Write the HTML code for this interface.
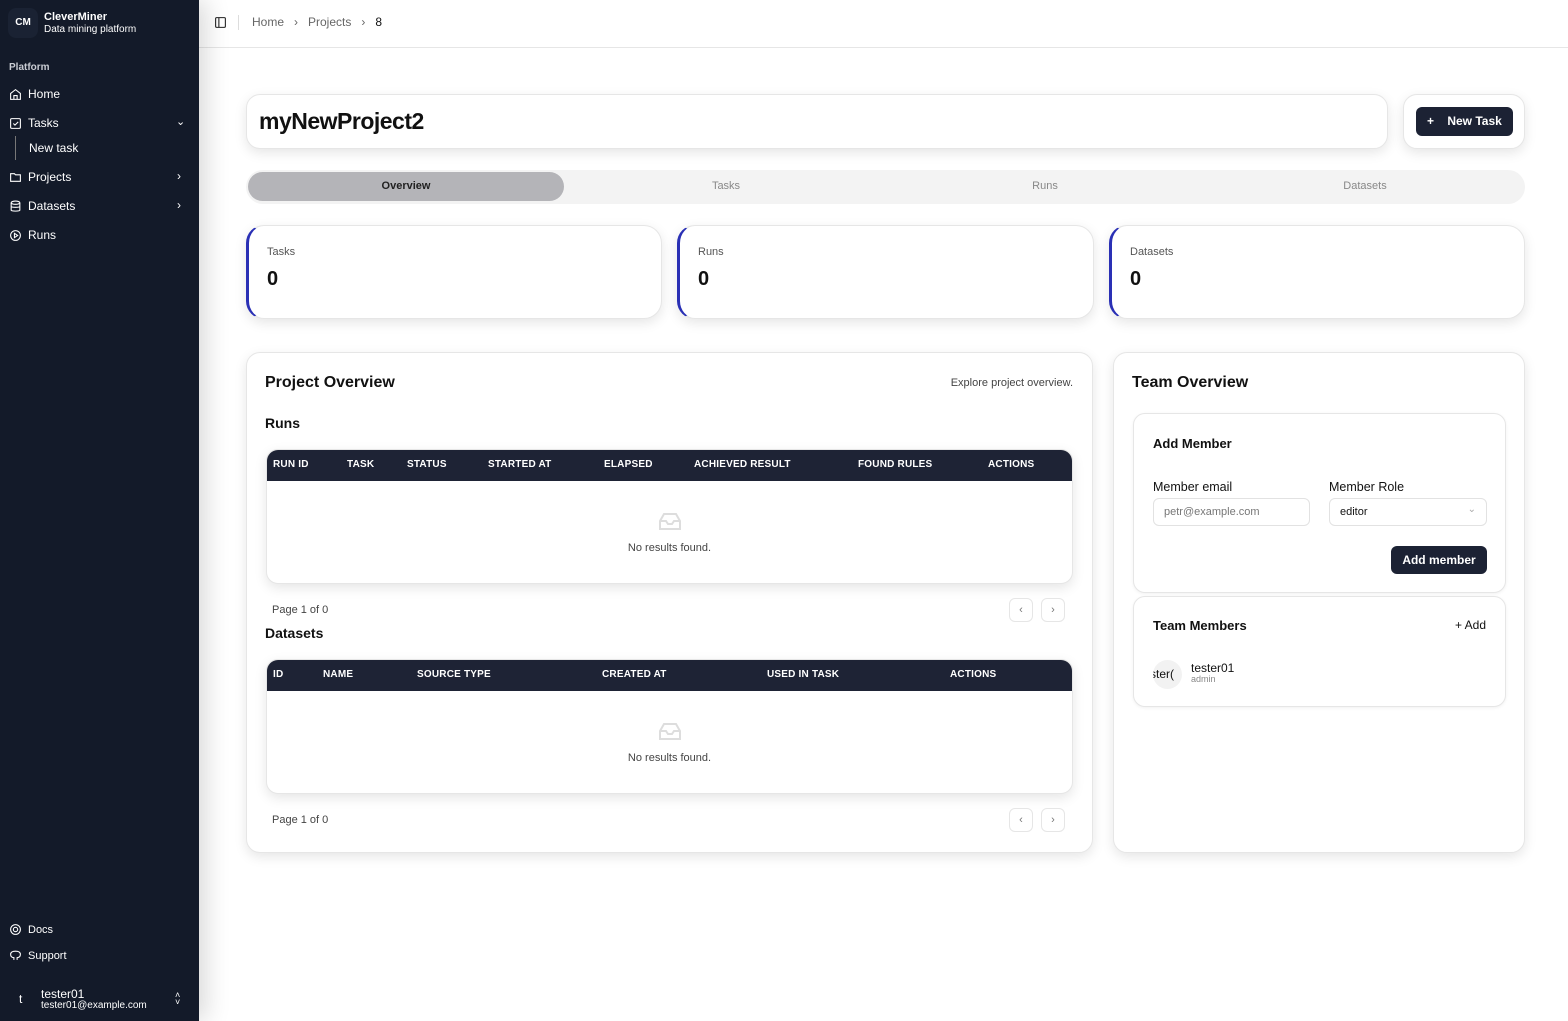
<!DOCTYPE html>
<html><head><meta charset="utf-8"><style>
*{box-sizing:border-box;margin:0;padding:0}
body{width:1568px;height:1021px;overflow:hidden;background:#fff;font-family:"Liberation Sans",sans-serif;color:#111;position:relative}
.a{position:absolute}
.sb{left:0;top:0;width:199px;height:1021px;background:#131a29;box-shadow:6px 0 24px rgba(0,0,0,.16);color:#fff;z-index:2}
.nav{position:absolute;left:9px;font-size:12px;display:flex;align-items:center;gap:6px}
.nav svg{width:13px;height:13px}
.card{position:absolute;background:#fff;border:1px solid #e6e6e6;border-radius:14px;box-shadow:0 4px 12px rgba(0,0,0,.1)}
.th{position:absolute;font-size:10px;font-weight:bold;color:#fff;top:9px;letter-spacing:.2px}
.pg{position:absolute;width:24px;height:24px;border:1px solid #e6e6e6;border-radius:6px;font-size:11px;color:#777;text-align:center;line-height:22px}
</style></head><body>
<div class="a sb">
 <div class="a" style="left:8px;top:8px;width:30px;height:30px;border-radius:8px;background:#1a2233;font-size:10px;font-weight:bold;text-align:center;line-height:30px">CM</div>
 <div class="a" style="left:44px;top:11px;font-size:11px;font-weight:bold">CleverMiner</div>
 <div class="a" style="left:44px;top:24px;font-size:10px">Data mining platform</div>
 <div class="a" style="left:9px;top:62px;font-size:10px;color:#c9ccd3;font-weight:bold">Platform</div>
 <div class="nav" style="top:87px"><svg viewBox="0 0 24 24" fill="none" stroke="#fff" stroke-width="2"><path d="M3 10l9-7 9 7v11H3z M9 21v-7h6v7"/></svg>Home</div>
 <div class="nav" style="top:116px"><svg viewBox="0 0 24 24" fill="none" stroke="#fff" stroke-width="2"><rect x="3" y="3" width="18" height="18" rx="2"/><path d="M8 12l3 3 6-6"/></svg>Tasks</div>
 <div class="a" style="left:176px;top:115px;font-size:11px">⌄</div>
 <div class="a" style="left:15px;top:136px;width:1px;height:24px;background:#777"></div>
 <div class="a" style="left:29px;top:141px;font-size:12px">New task</div>
 <div class="nav" style="top:170px"><svg viewBox="0 0 24 24" fill="none" stroke="#fff" stroke-width="2"><path d="M3 5h7l2 2h9v12H3z"/></svg>Projects</div>
 <div class="a" style="left:177px;top:169px;font-size:12px">›</div>
 <div class="nav" style="top:199px"><svg viewBox="0 0 24 24" fill="none" stroke="#fff" stroke-width="2"><ellipse cx="12" cy="5" rx="8" ry="3"/><path d="M4 5v14c0 2 16 2 16 0V5M4 12c0 2 16 2 16 0"/></svg>Datasets</div>
 <div class="a" style="left:177px;top:198px;font-size:12px">›</div>
 <div class="nav" style="top:228px"><svg viewBox="0 0 24 24" fill="none" stroke="#fff" stroke-width="2"><circle cx="12" cy="12" r="9"/><path d="M10 8l6 4-6 4z"/></svg>Runs</div>
 <div class="nav" style="top:923px;font-size:11px"><svg viewBox="0 0 24 24" fill="none" stroke="#fff" stroke-width="2"><circle cx="12" cy="12" r="9"/><circle cx="12" cy="12" r="4"/></svg>Docs</div>
 <div class="nav" style="top:949px;font-size:11px"><svg viewBox="0 0 24 24" fill="none" stroke="#fff" stroke-width="2"><path d="M9 20v-4c-4 0-6-2-6-6s3-6 9-6 9 2 9 6-2 6-6 6v4"/></svg>Support</div>
 <div class="a" style="left:19px;top:992px;font-size:12px">t</div>
 <div class="a" style="left:41px;top:987px;font-size:12px">tester01</div>
 <div class="a" style="left:41px;top:1000px;font-size:10px">tester01@example.com</div>
 <div class="a" style="left:175px;top:992px;font-size:9px;line-height:7px">˄<br>˅</div>
</div>
<div class="a" style="left:199px;top:47px;width:1369px;height:1px;background:#e6e6e6"></div>
<svg class="a" style="left:214px;top:16px" width="13" height="13" viewBox="0 0 24 24" fill="none" stroke="#222" stroke-width="2"><rect x="3" y="3" width="18" height="18" rx="2"/><path d="M9 3v18"/></svg>
<div class="a" style="left:238px;top:15px;width:1px;height:15px;background:#ddd"></div>
<div class="a" style="left:252px;top:15px;font-size:12px;color:#666">Home &nbsp;&nbsp;›&nbsp;&nbsp; Projects &nbsp;&nbsp;›&nbsp;&nbsp; <span style="color:#111">8</span></div>

<div class="card" style="left:246px;top:94px;width:1142px;height:55px"><div class="a" style="left:12px;top:13px;font-size:23px;font-weight:bold;letter-spacing:-.5px">myNewProject2</div></div>
<div class="card" style="left:1403px;top:94px;width:122px;height:55px"><div class="a" style="left:12px;top:12px;width:97px;height:29px;background:#1c2234;border-radius:6px;color:#fff;font-size:12px;font-weight:bold;line-height:29px;padding-left:11px">+ &nbsp;&nbsp; New Task</div></div>

<div class="a" style="left:246px;top:170px;width:1279px;height:34px;background:#f3f3f3;border-radius:17px"></div>
<div class="a" style="left:248px;top:172px;width:316px;height:29px;background:#b4b4b8;border-radius:15px;font-size:11px;text-align:center;line-height:29px;font-weight:bold;color:#222">Overview</div>
<div class="a" style="left:726px;top:180px;font-size:11px;color:#888;transform:translateX(-50%)">Tasks</div>
<div class="a" style="left:1045px;top:180px;font-size:11px;color:#888;transform:translateX(-50%)">Runs</div>
<div class="a" style="left:1365px;top:180px;font-size:11px;color:#888;transform:translateX(-50%)">Datasets</div>

<div class="card" style="left:246px;top:225px;width:416px;height:94px;border-left:3px solid #2a30b5;border-radius:18px"><div class="a" style="left:18px;top:20px;font-size:11px;color:#555">Tasks</div><div class="a" style="left:18px;top:42px;font-size:20px;font-weight:bold">0</div></div>
<div class="card" style="left:677px;top:225px;width:417px;height:94px;border-left:3px solid #2a30b5;border-radius:18px"><div class="a" style="left:18px;top:20px;font-size:11px;color:#555">Runs</div><div class="a" style="left:18px;top:42px;font-size:20px;font-weight:bold">0</div></div>
<div class="card" style="left:1109px;top:225px;width:416px;height:94px;border-left:3px solid #2a30b5;border-radius:18px"><div class="a" style="left:18px;top:20px;font-size:11px;color:#555">Datasets</div><div class="a" style="left:18px;top:42px;font-size:20px;font-weight:bold">0</div></div>

<div class="card" style="left:246px;top:352px;width:847px;height:501px">
 <div class="a" style="left:18px;top:21px;font-size:16px;font-weight:bold">Project Overview</div>
 <div class="a" style="right:19px;top:24px;font-size:11px;color:#444">Explore project overview.</div>
 <div class="a" style="left:18px;top:62px;font-size:14px;font-weight:bold">Runs</div>
 <div class="card" style="left:19px;top:96px;width:807px;height:135px;border-radius:12px;overflow:hidden">
  <div class="a" style="left:0;top:0;width:100%;height:31px;background:#1e2335">
   <div class="th" style="left:6px">RUN ID</div><div class="th" style="left:80px">TASK</div><div class="th" style="left:140px">STATUS</div><div class="th" style="left:221px">STARTED AT</div><div class="th" style="left:337px">ELAPSED</div><div class="th" style="left:427px">ACHIEVED RESULT</div><div class="th" style="left:591px">FOUND RULES</div><div class="th" style="left:721px">ACTIONS</div>
  </div>
  <svg class="a" style="left:391px;top:62px" width="24" height="20" viewBox="0 0 24 20" fill="none" stroke="#ddd" stroke-width="2"><path d="M2 9l4-7h12l4 7v8H2z M2 9h6l2 3h4l2-3h6"/></svg>
  <div class="a" style="left:0;width:100%;top:92px;text-align:center;font-size:11px;color:#444">No results found.</div>
 </div>
 <div class="a" style="left:25px;top:251px;font-size:11px;color:#444">Page 1 of 0</div>
 <div class="pg" style="left:762px;top:245px">‹</div><div class="pg" style="left:794px;top:245px">›</div>
 <div class="a" style="left:18px;top:272px;font-size:14px;font-weight:bold">Datasets</div>
 <div class="card" style="left:19px;top:306px;width:807px;height:135px;border-radius:12px;overflow:hidden">
  <div class="a" style="left:0;top:0;width:100%;height:31px;background:#1e2335">
   <div class="th" style="left:6px">ID</div><div class="th" style="left:56px">NAME</div><div class="th" style="left:150px">SOURCE TYPE</div><div class="th" style="left:335px">CREATED AT</div><div class="th" style="left:500px">USED IN TASK</div><div class="th" style="left:683px">ACTIONS</div>
  </div>
  <svg class="a" style="left:391px;top:62px" width="24" height="20" viewBox="0 0 24 20" fill="none" stroke="#ddd" stroke-width="2"><path d="M2 9l4-7h12l4 7v8H2z M2 9h6l2 3h4l2-3h6"/></svg>
  <div class="a" style="left:0;width:100%;top:92px;text-align:center;font-size:11px;color:#444">No results found.</div>
 </div>
 <div class="a" style="left:25px;top:461px;font-size:11px;color:#444">Page 1 of 0</div>
 <div class="pg" style="left:762px;top:455px">‹</div><div class="pg" style="left:794px;top:455px">›</div>
</div>

<div class="card" style="left:1113px;top:352px;width:412px;height:501px">
 <div class="a" style="left:18px;top:21px;font-size:16px;font-weight:bold">Team Overview</div>
 <div class="card" style="left:19px;top:60px;width:373px;height:180px;border-radius:12px;box-shadow:0 1px 3px rgba(0,0,0,.06)">
  <div class="a" style="left:19px;top:22px;font-size:13px;font-weight:bold">Add Member</div>
  <div class="a" style="left:19px;top:66px;font-size:12.5px">Member email</div>
  <div class="a" style="left:195px;top:66px;font-size:12.5px">Member Role</div>
  <div class="a" style="left:19px;top:84px;width:157px;height:28px;border:1px solid #e2e2e2;border-radius:6px;font-size:11px;color:#777;padding:7px 10px">petr@example.com</div>
  <div class="a" style="left:195px;top:84px;width:158px;height:28px;border:1px solid #e2e2e2;border-radius:6px;font-size:11px;padding:7px 10px">editor<span style="position:absolute;right:10px;top:5px;color:#aaa;font-size:10px">⌄</span></div>
  <div class="a" style="left:257px;top:132px;width:96px;height:28px;background:#1c2234;border-radius:6px;color:#fff;font-size:12px;font-weight:bold;text-align:center;line-height:28px">Add member</div>
 </div>
 <div class="card" style="left:19px;top:243px;width:373px;height:111px;border-radius:12px;box-shadow:0 1px 3px rgba(0,0,0,.06)">
  <div class="a" style="left:19px;top:21px;font-size:13px;font-weight:bold">Team Members</div>
  <div class="a" style="right:19px;top:21px;font-size:12px">+ Add</div>
  <div class="a" style="left:19px;top:63px;width:29px;height:29px;border-radius:50%;background:#f2f2f2;overflow:hidden;font-size:12px;line-height:29px;text-indent:-3px;white-space:nowrap">ster(</div>
  <div class="a" style="left:57px;top:64px;font-size:12px">tester01</div>
  <div class="a" style="left:57px;top:77px;font-size:9px;color:#888">admin</div>
 </div>
</div>
</body></html>
